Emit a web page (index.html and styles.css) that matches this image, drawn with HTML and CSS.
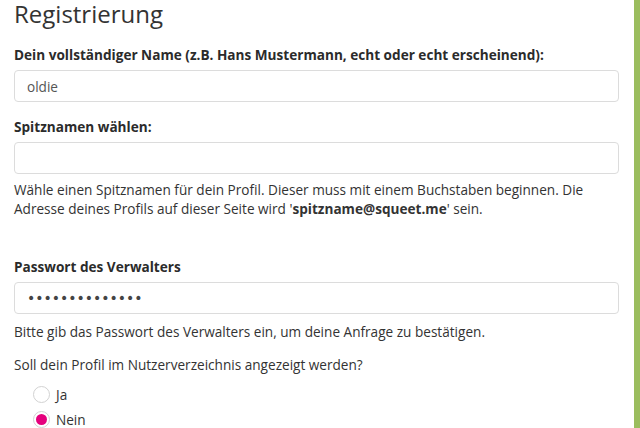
FILE: index.html
```html
<!doctype html>
<html lang="de">
<head>
  <meta charset="UTF-8">
  <title>Registrierung</title>
  <link rel="stylesheet" href="styles.css">
</head>
<body>
  <div class="page">
    <main class="content">
      <h1 class="title">Registrierung</h1>

      <div class="field field-first">
        <label class="label" for="name">Dein vollständiger Name (z.B. Hans Mustermann, echt oder echt erscheinend):</label>
        <input class="input" id="name" type="text" value="oldie">
      </div>

      <div class="field">
        <label class="label" for="nick">Spitznamen wählen:</label>
        <input class="input" id="nick" type="text">
        <p class="help">Wähle einen Spitznamen für dein Profil. Dieser muss mit einem Buchstaben beginnen. Die Adresse deines Profils auf dieser Seite wird '<b>spitzname@squeet.me</b>' sein.</p>
      </div>

      <div class="field field-gap">
        <label class="label" for="pw">Passwort des Verwalters</label>
        <input class="input pw" id="pw" type="password" value="geheimespasswo">
        <p class="help help-pw">Bitte gib das Passwort des Verwalters ein, um deine Anfrage zu bestätigen.</p>
      </div>

      <div class="field field-last">
        <p class="question">Soll dein Profil im Nutzerverzeichnis angezeigt werden?</p>
        <label class="radio"><span class="dot"></span>Ja</label>
        <label class="radio"><span class="dot on"></span>Nein</label>
      </div>
    </main>
    <div class="stripe"></div>
  </div>
</body>
</html>
```
FILE: styles.css
```css
*{
  box-sizing: border-box;
}
body{
  margin: 0;
  font-family: "Open Sans", "Liberation Sans", sans-serif;
  color: #333;
  font-size: 13.6px;
  background: #fff;
}
.page{
  display: flex;
  height: 428px;
  overflow: hidden;
}
.content{
  width: 634px;
  padding: 0 15px 0 14px;
}
.stripe{
  width: 6px;
  background: #9bbd5e;
}
.title{
  margin: 0;
  font-size: 24px;
  font-weight: 400;
  line-height: 27px;
  color: #333;
}
.field{
  margin-top: 16px;
}
.field-first{
  margin-top: 19px;
}
.field-gap{
  margin-top: 40px;
}
.field-last{
  margin-top: 15px;
}
.label{
  display: block;
  font-weight: 700;
  line-height: 18px;
  margin-bottom: 6px;
  color: #2b2b2b;
}
.input{
  display: block;
  width: 100%;
  height: 32px;
  border: 1px solid #dcdcdc;
  border-radius: 4px;
  padding: 0 12px;
  font-family: inherit;
  font-size: 13.6px;
  color: #555;
  outline: none;
}
.pw{
  font-family: "DejaVu Sans", sans-serif;
  font-size: 14px;
  color: #444;
}
.help{
  margin: 6px 0 0;
  line-height: 19px;
}
.help-pw{
  margin-top: 8px;
}
.question{
  margin: 0 0 8px;
  line-height: 18px;
}
.radio{
  display: flex;
  align-items: center;
  height: 25px;
  padding-left: 19px;
}
.dot{
  width: 17px;
  height: 17px;
  border: 1px solid #d2d2d2;
  border-radius: 50%;
  margin-right: 6px;
  position: relative;
}
.dot.on::after{
  content: "";
  position: absolute;
  left: 2px;
  top: 2px;
  width: 11px;
  height: 11px;
  border-radius: 50%;
  background: #e5007d;
}
```
